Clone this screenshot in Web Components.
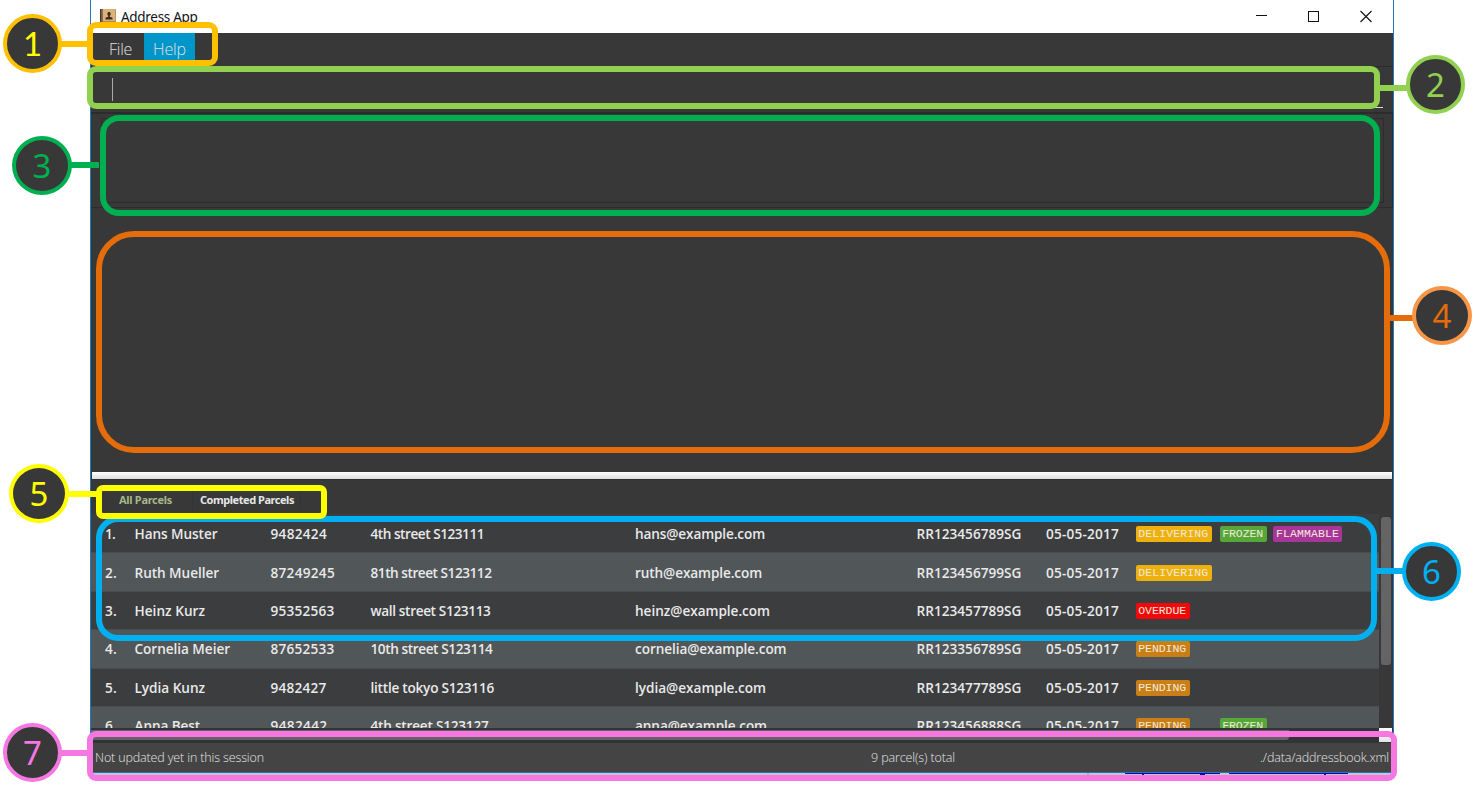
<!DOCTYPE html>
<html lang="en">
<head>
<meta charset="utf-8">
<title>Address App</title>
<style>
html,body{margin:0;background:#fff;overflow:hidden}
body{font-family:"Open Sans","Noto Sans",sans-serif}
</style>
</head>
<body>
<address-guide></address-guide>
<script>
const define = (name, html, ready) => customElements.define(name, class extends HTMLElement {
  connectedCallback() {
    if (this.shadowRoot) return;
    this.attachShadow({mode: 'open'}).innerHTML = typeof html === 'function' ? html(this) : html;
    if (ready) ready(this);
  }
});

// Text with a fixed advance width: letter spacing takes up the difference.
define('fit-text', '<style>:host{display:inline-block;white-space:pre}span{display:inline-block}</style><span><slot></slot></span>', el => {
  const span = el.shadowRoot.querySelector('span');
  const want = +el.getAttribute('w');
  const fit = () => {
    span.style.letterSpacing = '0px';
    const n = el.textContent.length;
    span.style.letterSpacing = ((want - span.getBoundingClientRect().width) / n) + 'px';
  };
  el.style.width = want + 'px';
  requestAnimationFrame(fit);
  fit();
});

define('title-bar', `<style>
:host{display:flex;height:33px;background:#fff;color:#111;align-items:flex-start;box-sizing:border-box;padding:8px 21px 0 9px;font-size:13.5px}
.book{margin-top:1px}
fit-text{margin-left:5px;line-height:18px;font-family:"Noto Sans",sans-serif}
.ctl{margin-left:auto;display:flex;gap:40px}
</style>
<svg class="book" width="16" height="16" viewBox="0 0 16 16"><rect width="16" height="14" rx=".5" fill="#a77b45"/><rect x="3" width="12.500" height="12.500" fill="#dcb27a"/><rect width="1.500" height="14" fill="#3d3436"/><rect x="1.500" width="1.500" height="14" fill="#8b6a51"/><rect x="3" y="12" width="13" height="2" fill="#b98748"/><rect x="7.500" y="3" width="3" height="3.800" rx="1.300" fill="#3b2b20"/><path d="M8.200 6h1.600v1.800l2.700 1v1.700h-7V8.800l2.700-1z" fill="#3b2b20"/></svg>
<fit-text w="76.500">Address App</fit-text>
<div class="ctl">
<svg width="12" height="16"><path d="M0 7.5h11" stroke="#111" fill="none"/></svg>
<svg width="12" height="16"><rect x=".5" y="3.5" width="10" height="10" stroke="#111" fill="none"/></svg>
<svg width="12" height="16"><path d="M.5 3l11 11M11.500 3l-11 11" stroke="#111" fill="none" stroke-width="1.1"/></svg>
</div>`);

define('menu-bar', `<style>
:host{display:flex;height:33px;background:#383838;color:#e0e0e0;font-weight:300;font-size:16px;line-height:33px}
div{height:33px}
.item{padding:0 12px 0 18px}
.on{padding:0 9px;background:#0096c9}
</style><div class="item"><fit-text w="23">File</fit-text></div><div class="on"><fit-text w="33">Help</fit-text></div>`);

define('command-box', `<style>
:host{display:block;height:46px;box-sizing:border-box;border-top:1px solid #2b2b2b;padding:11px 10px 5px 10px;background:#383838}
div{height:29px;border-bottom:1px solid #ddd;padding-left:10.500px}
i{display:block;width:1.5px;height:23px;background:#aaa}
</style><div><i></i></div>`);

define('result-box', `<style>
:host{display:block;height:96px;box-sizing:border-box;border:2px solid #2c2c2c;border-width:2px 1px 1px 0;background:#383838;padding:4px 8px 4px 10px}
div{height:100%;box-sizing:border-box;border:1px solid #2c2c2c}
</style><div></div>`);

define('browser-pane', `<style>:host{display:block;height:264px;background:#383838}</style>`);
define('split-bar', `<style>:host{display:block;height:7px;border:solid #383838;border-width:0 1px;background:linear-gradient(#fff,#dedede)}</style>`);

define('parcel-tabs', `<style>
:host{display:flex;height:35px;box-sizing:border-box;padding:10px 0 0 28px;background:#383838;font-size:11px;font-weight:700;line-height:20px;color:#e6e6e6;font-family:"Noto Sans",sans-serif;border-top:1px solid #303030}
div{border-right:1px solid #333;height:20px}
.sel{color:#a6b788;padding-right:20px}
.other{padding:0 6px 0 7px}
</style><div class="sel"><fit-text w="53">All Parcels</fit-text></div><div class="other"><fit-text w="94">Completed Parcels</fit-text></div>`);

const tagColors = {DELIVERING: '#eeb00d', FROZEN: '#55a838', FLAMMABLE: '#a83699', OVERDUE: '#f20808', PENDING: '#c97e16'};
const tagWidths = {DELIVERING: 76, FROZEN: 47, FLAMMABLE: 69, OVERDUE: 54, PENDING: 54};
define('parcel-tag', el => {
  const t = el.getAttribute('kind');
  return `<style>
:host{display:block;width:${tagWidths[t]}px;height:16px;box-sizing:border-box;padding-left:2.500px;border-radius:2px;background:${tagColors[t]};color:#f3e9dc;font:11.5px/16px "Liberation Mono","Courier New",monospace}
</style><fit-text w="${tagWidths[t] - 6}">${t}</fit-text>`;
});

define('parcel-row', el => {
  const cells = el.getAttribute('cells').split('|').map(c => c.split('~'));
  const tags = (el.getAttribute('tags') || '').split(' ');
  return `<style>
:host{display:grid;flex:none;height:38.4px;box-sizing:border-box;grid-template-columns:29.5px 136px 100px 264.5px 281.5px 129.500px 89.700px 84px 53.800px 1fr;align-items:center;padding:1px 0 0 14px;color:#e9e9e9;font-size:13.6px;font-weight:600;line-height:20px;border-top:1px solid #4a4c4d}
</style>${cells.map(([t, w]) => `<fit-text w="${w}">${t}</fit-text>`).join('')}${tags.map(t => `<parcel-tag kind="${t}"></parcel-tag>`).join('')}`;
});

const parcels = [
  ['1.~10|Hans Muster~83|9482424~56.500|4th street S123111~113.500|hans@example.com~130|RR123456789SG~105|05-05-2017~73', 'DELIVERING FROZEN FLAMMABLE'],
  ['2.~12|Ruth Mueller~84.500|87249245~64.500|81th street S123112~121|ruth@example.com~127|RR123456799SG~105|05-05-2017~73', 'DELIVERING'],
  ['3.~12|Heinz Kurz~70.500|95352563~64|wall street S123113~120|heinz@example.com~135|RR123457789SG~105|05-05-2017~73', 'OVERDUE'],
  ['4.~12|Cornelia Meier~95.500|87652533~64|10th street S123114~122|cornelia@example.com~151.500|RR123356789SG~105|05-05-2017~73', 'PENDING'],
  ['5.~12|Lydia Kunz~70.500|9482427~56|little tokyo S123116~123.500|lydia@example.com~131|RR123477789SG~105|05-05-2017~73', 'PENDING'],
  ['6.~12|Anna Best~65.500|9482442~57|4th street S123127~118|anna@example.com~132|RR123456888SG~105|05-05-2017~73', 'PENDING FROZEN']
];
define('parcel-list', `<style>
:host{display:grid;grid-template:214px 15px / 1288px 14px;background:#333}
.rows{display:flex;flex-direction:column;overflow:hidden;background:#3c3d3f}
parcel-row:first-child{border-top-color:#3c3d3f}
parcel-row:nth-child(even){background:#515658}
.v{padding:3px 2.500px 0 2px;background:#383838}
.v i{display:block;height:148px;border-radius:3px;background:#646464}
.h{background:#333}
.h i{display:block;width:1198px;height:10px;margin-top:2px;border-radius:0 0 3px 0;background:#646464}
.c{background:linear-gradient(#fff,#e4e4e4);height:14px;margin-right:1px}
</style><div class="rows">${parcels.map(([c, t]) => `<parcel-row cells="${c}" tags="${t}"></parcel-row>`).join('')}</div><div class="v"><i></i></div><div class="h"><i></i></div><div class="c"></div>`);

define('status-bar', `<style>
:host{display:grid;grid-template-columns:776px 1fr auto;height:29px;padding:0 4px 0 4px;background:#444;color:#e4e4e4;font-weight:300;font-size:12.5px;line-height:30px}
</style><fit-text w="169">Not updated yet in this session</fit-text><fit-text w="84">9 parcel(s) total</fit-text><fit-text w="129">./data/addressbook.xml</fit-text>`);

define('app-window', `<style>
:host{display:flex;flex-direction:column;width:1302px;margin-left:90px;border:solid #2577b8;border-width:0 1px 1px;height:772px;box-sizing:content-box}
</style><title-bar></title-bar><menu-bar></menu-bar><command-box></command-box><result-box></result-box><browser-pane></browser-pane><split-bar></split-bar><parcel-tabs></parcel-tabs><parcel-list></parcel-list><status-bar></status-bar>`);

// The sliver of a page that shows under the window's bottom edge.
define('page-sliver', `<style>:host{display:block;height:3px;width:1304px;margin-left:90px;background:#c4c8cd}svg{display:block}</style>
<svg width="1304" height="3"><path d="M998 0v3" stroke="#999"/><path d="M1035 .5h95M1139 .5h119" stroke="#0808b8"/><path d="M1052 1.500h2M1110 1.500h5M1234 1.500h2" stroke="#0808b8"/></svg>`);

// Numbered callout: frame round a part of the window, leader line, disc.
define('call-out', el => {
  const [x, y, w, h, r] = el.getAttribute('box').split(' ');
  const [dx, dy] = el.getAttribute('disc').split(' ');
  const [lx, ly, lw] = el.getAttribute('line').split(' ');
  const c = el.getAttribute('color');
  const face = el.textContent === '1' ? 'Lato' : '"Noto Sans"';
  return `<style>
:host{position:absolute;left:0;top:0;width:0;height:0}
div{position:absolute;box-sizing:border-box}
.frame{left:${x}px;top:${y}px;width:${w}px;height:${h}px;border:6px solid ${c};border-radius:${r}px}
.line{left:${lx}px;top:${ly}px;width:${lw}px;height:6px;background:${c}}
.disc{left:${dx}px;top:${dy}px;width:${el.getAttribute('size') || 59}px;height:59px;border:4px solid ${el.getAttribute('ring') || c};border-radius:50%;background:#383838;color:${el.getAttribute('ink') || c};display:flex;align-items:center;justify-content:center;font:33px/51px ${face},sans-serif}
</style><div class="frame"></div><div class="line"></div><div class="disc"><slot></slot></div>`;
});

define('address-guide', `<style>:host{display:block;position:relative;width:1475px;height:798px;overflow:hidden;background:#fff}</style>
<app-window></app-window><page-sliver></page-sliver>
<call-out color="#ffc000" ink="#ffff00" box="87 22 131 44 9" line="60 41 28" disc="3 14">1</call-out>
<call-out color="#92d050" box="87 66 1293 43 9" line="1379 85 29" disc="1406 55">2</call-out>
<call-out color="#00b050" box="100 115 1280 101 19" line="70 162 29" disc="12 136" size="60">3</call-out>
<call-out color="#e46c0a" ring="#f79646" box="96 231 1294 222 38" line="1389 315 25" disc="1412 286" size="60">4</call-out>
<call-out color="#00b0f0" box="96 516 1281 125 22" line="1376 568 28" disc="1402 542">6</call-out>
<call-out color="#ffff00" box="96 485 231 34 7" line="67 491 30" disc="9 464" size="60">5</call-out>
<call-out color="#f577e2" box="87 731 1310 50 9" line="60 750 28" disc="3 723">7</call-out>`);
</script>
</body>
</html>
